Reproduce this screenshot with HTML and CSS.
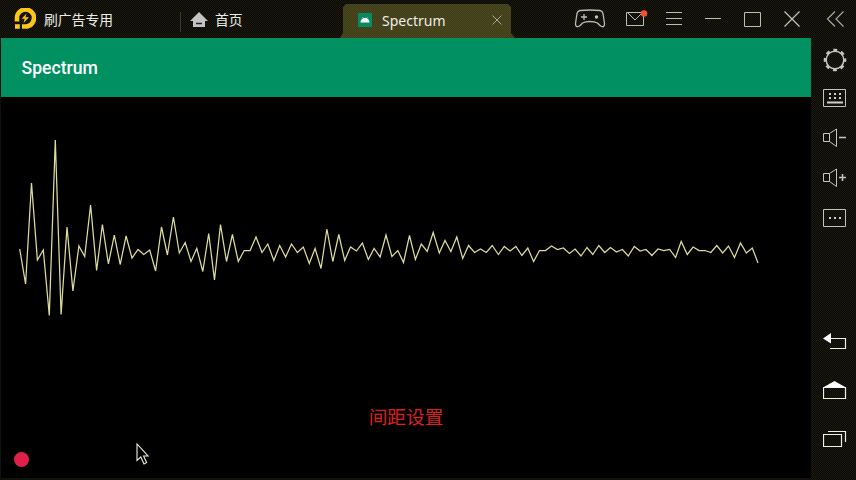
FILE: index.html
```html
<!DOCTYPE html>
<html lang="zh-CN">
<head>
<meta charset="utf-8">
<title>Spectrum</title>
<link rel="stylesheet" href="styles.css">
</head>
<body>
<div class="window">
  <div class="main">
    <header class="titlebar">
      <svg class="logo" width="22" height="22" viewBox="0 0 22 22">
        <path d="M3 13.500V10A8.500 8.500 0 1 1 11.500 18.500H8" fill="none" stroke="#fcc51c" stroke-width="4.600"/>
        <path d="M1 16.200h4.800v4.600H1z" fill="#fcc51c"/>
        <path d="M12.500 5.500L7.500 10.800h3.200L9.500 15l5.500-5.800h-3.500z" fill="#fcc51c"/>
      </svg>
      <span class="name">刷广告专用</span>
      <span class="divider"></span>
      <svg class="house" width="18" height="16" viewBox="0 0 18 16">
        <path d="M9 0L0 9h3v6h12V9h3z" fill="#c4c4c4"/><path d="M6 11.500h6" stroke="#222" stroke-width="1.500"/>
      </svg>
      <span class="home">首页</span>
      <div class="tab">
        <svg width="14" height="14" viewBox="0 0 14 14"><path d="M0 0h14v14H0z" fill="#078a62"/><path d="M2.500 9.500C2.500 7 4 5.800 5 5.400L4 4l1.500 1h3L10 4 9 5.400c1 .4 2.500 1.600 2.500 4.100z" fill="#f4fff8"/></svg>
        <span class="tab-name">Spectrum</span>
        <svg class="tab-close" width="10" height="10" viewBox="0 0 10 10"><path d="M.5.5l9 9m0-9l-9 9" stroke="#a6a69a"/></svg>
      </div>
      <div class="tools">
        <svg width="32" height="20" viewBox="0 0 32 20" fill="none" stroke="#bdbdb5" stroke-width="1.300">
          <path d="M6 1.500Q16 .5 26 1.500Q28.500 2 29 4.500L30.500 14.500Q30.500 18.500 27.500 17.500Q26 17 23.500 14Q20.500 12.500 16 12.500Q11.500 12.500 8.500 14Q6 17 4.500 17.500Q1.500 18.500 1.500 14.500L3 4.500Q3.500 2 6 1.500z"/>
          <path d="M7 8h6m-3-3v6"/><circle cx="22.500" cy="8" r="1.700" fill="#c4c4bc" stroke="none"/>
        </svg>
        <svg class="mail" width="22" height="20" viewBox="0 0 22 20"><path d="M.5 3.500h17v13H.5zM2 4l7 7 7-7" fill="none" stroke="#bdbdb5"/><circle cx="18" cy="4.500" r="3.300" fill="#f4502c"/></svg>
        <svg width="16" height="20" viewBox="0 0 16 20"><path d="M0 3.500h16M0 9.500h16M0 15.500h16" stroke="#bdbdb5"/></svg>
        <svg width="16" height="20" viewBox="0 0 16 20"><path d="M0 9.500h16" stroke="#bdbdb5"/></svg>
        <svg width="17" height="20" viewBox="0 0 17 20"><path d="M.5 3.500h16v14H.5z" fill="none" stroke="#bdbdb5"/></svg>
        <svg width="16" height="20" viewBox="0 0 16 20"><path d="M.5 2.500l15 15m0-15l-15 15" stroke="#c4c4bc" stroke-width="1.200"/></svg>
      </div>
    </header>
    <div class="appbar">Spectrum</div>
    <main class="screen">
      <svg class="wave" width="810" height="300" viewBox="1 97 810 300">
        <polyline fill="none" stroke="#dedc9c" stroke-width="1.250" points="19.700,249 25.600,284 31.500,183 37.400,260 43.300,250 49.300,315.500 55.300,140 61.100,314.500 67,227 72.900,291 78.900,246 84.700,256.500 90.600,205 96.600,270.500 102.400,224.500 108.400,264 114.300,235 120.200,264.500 126.100,236 132,258 138,249.500 143.800,254.500 149.700,250 155.600,271 161.500,227 167.400,255 173.400,217 179.300,253 185.200,242.500 191,261.500 196.800,248.300 202.800,271.500 208.700,233.500 214.500,280 220.500,224.500 226.500,261.500 232.400,234.500 238.300,261.500 244.200,250.500 250.100,250.500 256,237 262,252.500 267.800,244 273.800,260.500 279.700,245.500 285.600,257 291.500,244 297.400,252.500 303.300,247 309.300,263.500 315.100,248.500 321,268.500 326.900,229 332.800,261.500 338.800,234.500 344.700,260.500 350.500,247 356.400,251 362.400,243 368.300,259.500 374.100,248.500 380.100,257 386,235 391.900,256.500 397.800,250.500 403.500,262.500 409.500,235.500 415.400,259.500 421.300,244 427.200,251.500 433.200,232.500 439.300,253 445,240.500 450.900,251.500 456.800,237 462.700,258.500 468.500,245.500 474.600,252.500 480.500,249 486.300,252.500 492.200,245.500 498.400,254.500 504.300,246.500 510.100,251 515.900,246.500 521.900,255.500 527.800,248 533.600,261.500 539.500,250.500 545.500,250.500 551.500,246 557.400,249.500 563.400,248 569.400,253.500 575.100,249 581,256 587,247.500 592.800,254.500 598.800,245.500 604.700,252.500 610.500,247.500 616.400,252 622.400,249.500 628.200,256 634.300,246.500 640.100,251 646,249.500 651.900,255.500 658,249 663.800,250.500 669.700,249.500 675.600,257.500 681.200,241.500 687.300,254.500 693.100,247 699.100,250.500 705.100,250.500 710.800,252.500 716.800,245.500 722.700,253 728.500,246 734.500,257.500 740.500,243 746.400,253 752.300,248 758,263"/>
      </svg>
      <button class="spacing">间距设置</button>
      <span class="dot"></span>
      <svg class="cursor" width="14" height="24" viewBox="0 0 14 24"><path d="M1 1v16.500l3.800-3.600 3.200 7 2.600-1.300-3-6.600H12z" fill="#000" stroke="#eeeed8" stroke-width="1.100"/></svg>
    </main>
  </div>
  <aside class="sidebar">
    <svg width="24" height="24" viewBox="0 0 24 24"><path d="M12 4.500L4.500 12l7.500 7.500M20.500 4.500L13 12l7.500 7.500" fill="none" stroke="#a8a8a0" stroke-width="1.200"/></svg>
    <svg width="24" height="24" viewBox="0 0 24 24" fill="none" stroke="#c4c4bc"><circle cx="12" cy="12" r="8.800" stroke-width="1.500"/><circle cx="12" cy="12" r="10" stroke-width="2.600" stroke-dasharray="3.854 4" stroke-dashoffset="1.927"/></svg>
    <svg width="24" height="24" viewBox="0 0 24 24"><path d="M.5 3.500h22v17H.5z" fill="none" stroke="#c4c4bc"/><path d="M6 8h2m3 0h2m3 0h2M6 12h2m3 0h2m3 0h2M4 16.500h16" stroke="#d0d0c8" stroke-width="2"/></svg>
    <svg width="24" height="24" viewBox="0 0 24 24"><path d="M.5 7.500h6v8h-6zM6.500 7.500l7-4.500v17.500l-7-5" fill="none" stroke="#c4c4bc"/><path d="M16 11.500h7" stroke="#c4c4bc" stroke-width="1.600"/></svg>
    <svg width="24" height="24" viewBox="0 0 24 24"><path d="M.5 7.500h6v8h-6zM6.500 7.500l7-4.500v17.500l-7-5" fill="none" stroke="#c4c4bc"/><path d="M16 11.500h7m-3.500-3.500v7" stroke="#c4c4bc" stroke-width="1.600"/></svg>
    <svg width="24" height="24" viewBox="0 0 24 24"><path d="M.5 3.500h22v17H.5z" fill="none" stroke="#c4c4bc"/><path d="M6 12h2m3 0h2m3 0h2" stroke="#d0d0c8" stroke-width="2"/></svg>
    <svg class="back" width="24" height="24" viewBox="0 0 24 24"><path d="M7 8.500h15.500v10H7" fill="none" stroke="#f0f0e4" stroke-width="1.200"/><path d="M0 8.500L8 3v10.500z" fill="#fff"/></svg>
    <svg class="nav" width="24" height="24" viewBox="0 0 24 24"><path d="M.5 9.500h22v11H.5z" fill="none" stroke="#f0f0e4" stroke-width="1.200"/><path d="M0 9.500L11.500 3 23 9.500z" fill="#fff"/></svg>
    <svg class="nav" width="24" height="24" viewBox="0 0 24 24"><path d="M.5 7.500h18v12H.5zM5 4.500h17.500v10.500" fill="none" stroke="#f0f0e4" stroke-width="1.200"/></svg>
  </aside>
</div>
</body>
</html>
```
FILE: styles.css
```css
* { box-sizing: border-box; }

body {
  margin: 0;
  background: #000;
  font-family: "Noto Sans", "Noto Sans CJK SC", sans-serif;
  overflow: hidden;
}

svg { display: block; flex: none; }

.window {
  display: flex;
  width: 856px;
  height: 480px;
  background: repeating-conic-gradient(#080808 0 25%, #1c1b0c 0 50%) 0 0 / 2px 2px;
}

.main {
  display: flex;
  flex-direction: column;
  width: 811px;
  padding: 0 0 2px 1px;
}

.titlebar {
  display: flex;
  align-items: center;
  height: 38px;
  padding-left: 13px;
  color: #ecece6;
  font-size: 13.800px;
  white-space: nowrap;
}

.name {
  width: 136px;
  margin-left: 8px;
}

.divider {
  width: 1px;
  height: 20px;
  margin-top: 6px;
  background: #39392e;
}

.house { margin: 2px 7px 0 9px; }

.home { width: 125px; }

.tab {
  display: flex;
  align-items: center;
  align-self: flex-end;
  width: 175px;
  height: 34px;
  padding: 0 12px 2px 18px;
  background: repeating-conic-gradient(#3c3b20 0 25%, #4c4a16 0 50%) 0 0 / 2px 2px;
  clip-path: polygon(3px 3px, 6px 0, 168px 0, 171px 3px, 171px 29px, 175px 34px, 0 34px, 3px 29px);
}

.tab-name {
  flex: 1;
  margin-left: 10px;
  font-size: 14px;
}

.tab-close { margin-right: 1px; }

.tools {
  display: flex;
  align-items: center;
  gap: 23px;
  margin-left: 59px;
}

.mail { margin: 0 -5px 0 -3px; }

.appbar {
  height: 59px;
  padding: 1px 0 0 20.500px;
  background: repeating-conic-gradient(#00955a 0 25%, #008a66 0 50%) 0 0 / 2px 2px;
  color: #fff;
  font: 500 17.600px/59px Roboto, sans-serif;
}

.screen {
  position: relative;
  display: flex;
  flex-direction: column;
  align-items: center;
  flex: 1;
  background: #000;
}

.spacing {
  margin: 5px 0 0;
  padding: 0;
  border: 0;
  background: none;
  color: #dc2020;
  font: 18.700px/27px "Noto Sans CJK SC", sans-serif;
}

.dot {
  position: absolute;
  left: 13px;
  bottom: 11px;
  width: 15px;
  height: 15px;
  border-radius: 50%;
  background: #e02048;
}

.cursor {
  position: absolute;
  left: 135px;
  top: 346px;
}

.sidebar {
  display: flex;
  flex-direction: column;
  align-items: center;
  width: 45px;
  padding: 7px 0 0 3px;
  gap: 16px;
}

.sidebar svg:nth-child(2) { margin-top: 1px; }
.sidebar svg:nth-child(3) { margin-top: -2px; }
.sidebar .back { margin-top: 84px; }
.sidebar .nav { margin-top: 8px; }
.sidebar .nav + .nav { margin-top: 9px; }
```
